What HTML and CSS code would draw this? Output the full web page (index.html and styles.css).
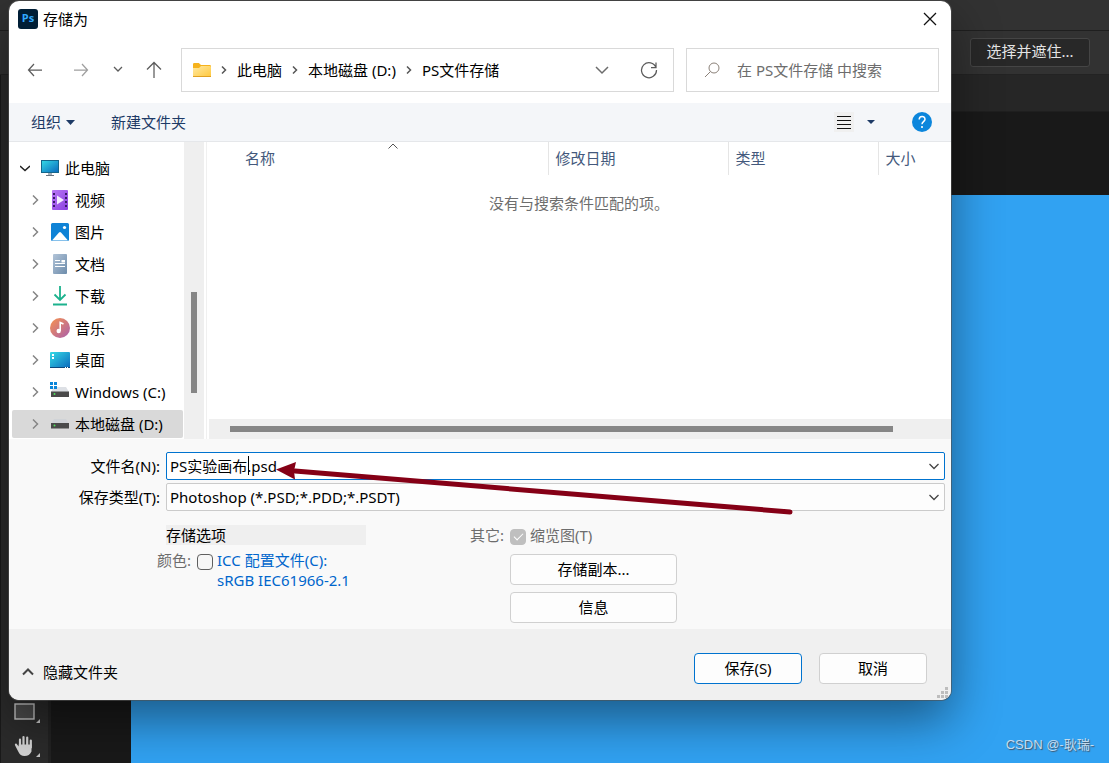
FILE: index.html
```
<!DOCTYPE html>
<html lang="zh-CN">
<head>
<meta charset="utf-8">
<title>存储为</title>
<link rel="stylesheet" href="styles.css">
</head>
<body>
<div class="app">
  <div class="menu-bar"></div>
  <div class="options-bar"><button class="mask-button" type="button">选择并遮住...</button></div>
  <div class="workspace">
    <div class="tools">
      <button class="tool" type="button" aria-label="矩形工具">
        <svg width="28" height="24" viewBox="0 0 28 24"><rect x="3" y="4" width="19" height="15" fill="#4a4a4a" stroke="#c4c4c4" stroke-width="1.4"/><path d="M28 19v4h-4z" fill="#c4c4c4"/></svg>
      </button>
      <button class="tool" type="button" aria-label="抓手工具">
        <svg width="28" height="24" viewBox="0 0 28 24"><path d="M8 14.500V5.500M11.500 12V3M15.200 12V3.500M18.800 13.500V6.500" stroke="#d2d2d2" stroke-width="2.200" stroke-linecap="round"/><path d="M7 10.500h12.800v2l2-2.500c1-1 2.200 0 1.700 1.200l-3.500 6.800c-1.200 2.500-3 4-6 4-3.500 0-5.500-1.500-7-4.500z" fill="#d2d2d2" transform="translate(27) scale(-1 1) translate(.5)"/><path d="M28 19v4h-4z" fill="#c4c4c4"/></svg>
      </button>
    </div>
    <div class="document">
      <div class="tab-bar"></div>
      <div class="pasteboard"><div class="canvas"><span class="watermark">CSDN @-耿瑞-</span></div></div>
    </div>
  </div>
</div>

<main class="dialog" role="dialog" aria-labelledby="dialog-title">
  <header class="title-bar">
    <svg width="20" height="20" viewBox="0 0 20 20"><rect width="20" height="20" rx="3" fill="#001e36"/><text class="logo-text" x="10" y="13" text-anchor="middle" fill="#31a8ff">Ps</text></svg>
    <h1 class="title" id="dialog-title">存储为</h1>
    <button class="icon-button close" type="button" aria-label="关闭"><svg width="14" height="14" viewBox="0 0 14 14"><path d="M1 1l12 12M13 1L1 13" class="line medium" stroke="#111"/></svg></button>
  </header>

  <nav class="nav-row">
    <button class="icon-button" type="button" aria-label="后退"><svg width="16" height="16" viewBox="0 0 16 16"><path d="M15 8H1.500M7 2L1.500 8L7 14" class="line medium" stroke="#5c5c5c"/></svg></button>
    <button class="icon-button forward" type="button" aria-label="前进"><svg width="16" height="16" viewBox="0 0 16 16"><path d="M1 8h13.500M9 2l5.500 6L9 14" class="line medium" stroke="#9f9f9f"/></svg></button>
    <button class="icon-button recent" type="button" aria-label="最近位置"><svg width="10" height="8" viewBox="0 0 10 8"><path d="M1 1l4 4 4-4" class="line medium" stroke="#5c5c5c"/></svg></button>
    <button class="icon-button" type="button" aria-label="上移"><svg width="16" height="18" viewBox="0 0 16 18"><path d="M8 17V2M1 8.500L8 1.500l7 7" class="line medium" stroke="#5c5c5c"/></svg></button>
    <div class="address">
      <svg width="18" height="15" viewBox="0 0 18 15"><defs><linearGradient id="folder" x1="0" y1="0" x2="1" y2="1"><stop stop-color="#ffe9a2"/><stop offset="1" stop-color="#ffc83d"/></linearGradient></defs><path d="M0 1.200Q0 0 1.200 0h4.600L8 2h8.800Q18 2 18 3.200V7H0z" fill="#f6b21c"/><path d="M0 5h6l2-2h8.800Q18 3 18 4.200v8.600q0 1.200-1.200 1.200H1.200Q0 14 0 12.800z" fill="url(#folder)"/><path d="M0 13.500h18" stroke="#e0a020"/></svg>
      <svg class="crumb-sep" width="6" height="8" viewBox="0 0 6 8"><path d="M1 .5L4.500 4L1 7.500" class="line bold" stroke="#555"/></svg>
      <a class="crumb" href="#pc">此电脑</a>
      <svg class="crumb-sep" width="6" height="8" viewBox="0 0 6 8"><path d="M1 .5L4.500 4L1 7.500" class="line bold" stroke="#555"/></svg>
      <a class="crumb" href="#d">本地磁盘 (D:)</a>
      <svg class="crumb-sep" width="6" height="8" viewBox="0 0 6 8"><path d="M1 .5L4.500 4L1 7.500" class="line bold" stroke="#555"/></svg>
      <a class="crumb" href="#ps">PS文件存储</a>
      <span class="spacer"></span>
      <button class="icon-button" type="button" aria-label="展开"><svg width="14" height="10" viewBox="0 0 14 10"><path d="M1 2l6 6 6-6" class="line bold" stroke="#6c6c6c"/></svg></button>
      <button class="icon-button refresh" type="button" aria-label="刷新"><svg width="18" height="18" viewBox="0 0 18 18"><path d="M16 6.500A7.500 7.500 0 1 0 16.500 9M16 1.500v5h-5" class="line medium" stroke="#5c5c5c"/></svg></button>
    </div>
    <label class="search">
      <svg width="16" height="16" viewBox="0 0 16 16"><circle cx="10" cy="6" r="5" class="line" stroke="#8b8179"/><path d="M6.500 9.500L1 15" class="line" stroke="#8b8179"/></svg>
      <input class="search-input" type="text" aria-label="搜索" placeholder="在 PS文件存储 中搜索">
    </label>
  </nav>

  <div class="command-bar">
    <button class="command" type="button">组织 <svg width="9" height="5" viewBox="0 0 9 5"><path d="M0 0h9L4.500 5z" fill="#1d3a66"/></svg></button>
    <button class="command" type="button">新建文件夹</button>
    <span class="spacer"></span>
    <button class="icon-button view" type="button" aria-label="视图"><svg width="20" height="20" viewBox="0 0 20 20"><rect width="20" height="20" fill="#f0f0f0"/><path d="M3 4.500h14M3 8.500h14M3 12.500h14M3 16.500h14" stroke="#111"/></svg></button>
    <button class="icon-button view-menu" type="button" aria-label="更多选项"><svg width="8" height="4" viewBox="0 0 8 4"><path d="M0 0h8L4 4z" fill="#1d3a66"/></svg></button>
    <button class="icon-button help" type="button" aria-label="帮助"><svg width="20" height="20" viewBox="0 0 20 20"><circle cx="10" cy="10" r="10" fill="#0c86dc"/><path d="M7.200 7.500C7.200 3.500 13 3.500 13 7.200c0 2.300-3 2.600-3 5" fill="none" stroke="#fff" stroke-width="1.500"/><circle cx="10" cy="15" r="1.100" fill="#fff"/></svg></button>
  </div>

  <div class="browser">
    <ul class="tree">
      <li class="node root"><svg class="twisty" width="10" height="8" viewBox="0 0 10 8"><path d="M0 2l5 4.500L10 2" class="line bold" stroke="#222"/></svg>
        <svg class="node-icon" width="20" height="18" viewBox="0 0 20 18"><defs><linearGradient id="screen" x1="0" y1="0" x2="1" y2="1"><stop stop-color="#35dbe6"/><stop offset="1" stop-color="#0a68bd"/></linearGradient></defs><rect x="1.500" y="1.500" width="17" height="12" fill="url(#screen)" stroke="#14668b"/><path d="M8 14h4v2H8z" fill="#a6b0ba"/><path d="M6 16.500h8" stroke="#68737e"/></svg>此电脑</li>
      <li class="node"><svg class="twisty" width="8" height="10" viewBox="0 0 8 10"><path d="M2 .5L6.500 5L2 9.500" class="line bold" stroke="#858585"/></svg>
        <svg class="node-icon" width="20" height="20" viewBox="0 0 20 20"><defs><linearGradient id="film" x1="0" y1="0" x2="1" y2="1"><stop stop-color="#b978f5"/><stop offset="1" stop-color="#8a3fe0"/></linearGradient></defs><rect x="2" width="16" height="20" rx="1" fill="url(#film)"/><path d="M4 3v16M16 3v16" stroke="#3b1a6b" stroke-width="2" stroke-dasharray="2 2"/><path d="M7 5.500l7 4.500-7 4.500z" fill="#f4edff"/></svg>视频</li>
      <li class="node"><svg class="twisty" width="8" height="10" viewBox="0 0 8 10"><path d="M2 .5L6.500 5L2 9.500" class="line bold" stroke="#858585"/></svg>
        <svg class="node-icon" width="20" height="20" viewBox="0 0 20 20"><rect x="1" y="1" width="18" height="18" rx="1.500" fill="#0f83d6"/><path d="M2 18.500l7-8q1-1 2 0l7 8z" fill="#fff"/><circle cx="14.500" cy="5.500" r="1.600" fill="#fff"/></svg>图片</li>
      <li class="node"><svg class="twisty" width="8" height="10" viewBox="0 0 8 10"><path d="M2 .5L6.500 5L2 9.500" class="line bold" stroke="#858585"/></svg>
        <svg class="node-icon" width="20" height="20" viewBox="0 0 20 20"><defs><linearGradient id="page" x1="0" y1="0" x2="1" y2="1"><stop stop-color="#b2c4d8"/><stop offset="1" stop-color="#6d8cab"/></linearGradient></defs><rect x="3" width="14" height="20" rx="1" fill="url(#page)"/><path d="M5 6.500h5M5 9.500h10M5 12.500h10" stroke="#fff" stroke-width="1.200"/><path d="M11.500 6H15v2.500h-3.500z" fill="#fff"/></svg>文档</li>
      <li class="node"><svg class="twisty" width="8" height="10" viewBox="0 0 8 10"><path d="M2 .5L6.500 5L2 9.500" class="line bold" stroke="#858585"/></svg>
        <svg class="node-icon" width="20" height="20" viewBox="0 0 20 20"><path d="M10 0v13.500M4.500 8.500l5.500 5.500 5.500-5.500M3 18.500h14" fill="none" stroke="#1cb28d" stroke-width="1.800"/></svg>下载</li>
      <li class="node"><svg class="twisty" width="8" height="10" viewBox="0 0 8 10"><path d="M2 .5L6.500 5L2 9.500" class="line bold" stroke="#858585"/></svg>
        <svg class="node-icon" width="20" height="20" viewBox="0 0 20 20"><defs><linearGradient id="music" x1="0" y1="0" x2="1" y2="1"><stop offset=".15" stop-color="#ec8b5c"/><stop offset="1" stop-color="#a95fae"/></linearGradient></defs><circle cx="10" cy="10" r="10" fill="url(#music)"/><circle cx="8.700" cy="13" r="2.200" fill="#fff"/><path d="M10.200 13V4.500L13.500 6" fill="none" stroke="#fff" stroke-width="1.600"/></svg>音乐</li>
      <li class="node"><svg class="twisty" width="8" height="10" viewBox="0 0 8 10"><path d="M2 .5L6.500 5L2 9.500" class="line bold" stroke="#858585"/></svg>
        <svg class="node-icon" width="20" height="20" viewBox="0 0 20 20"><rect y="2" width="20" height="16" rx="1" fill="url(#screen)"/><path d="M0 17.500h20" stroke="#0b477c"/><path d="M2 4h2v2H2zM2 7h2v2H2z" fill="#fff"/><path d="M15 17h1v1h-1zM17 17h1v1h-1z" fill="#fff"/></svg>桌面</li>
      <li class="node"><svg class="twisty" width="8" height="10" viewBox="0 0 8 10"><path d="M2 .5L6.500 5L2 9.500" class="line bold" stroke="#858585"/></svg>
        <svg class="node-icon" width="20" height="20" viewBox="0 0 20 20"><path d="M4 5h12l3 5H1z" fill="#dde0e5"/><rect x="1" y="9.500" width="18" height="5.500" fill="#4a4a4a"/><circle cx="4.500" cy="12" r="1" fill="#4fe05a"/><path d="M0 0h3v3H0zM4 0h3v3H4zM0 4h3v3H0zM4 4h3v3H4z" fill="#0a85d9"/></svg>Windows (C:)</li>
      <li class="node selected" aria-selected="true"><svg class="twisty" width="8" height="10" viewBox="0 0 8 10"><path d="M2 .5L6.500 5L2 9.500" class="line bold" stroke="#858585"/></svg>
        <svg class="node-icon" width="20" height="20" viewBox="0 0 20 20"><path d="M4 5h12l3 5H1z" fill="#d0d3d7"/><rect x="1" y="9" width="18" height="5.500" fill="#4a4a4a"/><circle cx="4.500" cy="11.500" r="1" fill="#4fe05a"/></svg>本地磁盘 (D:)</li>
    </ul>
    <div class="v-scroll"><div class="v-thumb"></div></div>
    <section class="files">
      <table class="file-table">
        <thead><tr>
          <th class="col-name">名称<svg class="sort-mark" width="10" height="6" viewBox="0 0 10 6"><path d="M.5 5.500L5 1l4.500 4.500" class="line" stroke="#555"/></svg></th>
          <th class="col-date">修改日期</th><th class="col-type">类型</th><th>大小</th>
        </tr></thead>
      </table>
      <p class="empty">没有与搜索条件匹配的项。</p>
      <div class="h-scroll"><div class="h-thumb"></div></div>
    </section>
  </div>

  <form class="form">
    <div class="fields">
      <label class="field-label" for="file-name">文件名(N):</label>
      <div class="combo">
        <input class="field active" id="file-name" type="text" value="PS实验画布.psd"><span class="caret"></span>
        <svg class="combo-arrow" width="10" height="7" viewBox="0 0 10 7"><path d="M.5 1L5 5.500L9.500 1" class="line medium" stroke="#444"/></svg>
      </div>
      <label class="field-label" for="file-type">保存类型(T):</label>
      <div class="combo">
        <select class="field" id="file-type"><option>Photoshop (*.PSD;*.PDD;*.PSDT)</option></select>
        <svg class="combo-arrow" width="10" height="7" viewBox="0 0 10 7"><path d="M.5 1L5 5.500L9.500 1" class="line medium" stroke="#444"/></svg>
      </div>
    </div>
    <div class="options">
      <div class="save-options">
        <h2 class="options-title">存储选项</h2>
        <div class="color-row">
          <span class="muted">颜色:</span>
          <input class="check" type="checkbox" id="icc">
          <label class="icc-label" for="icc">ICC 配置文件(C):<br>sRGB IEC61966-2.1</label>
        </div>
      </div>
      <div class="other-options">
        <span class="muted">其它:</span>
        <div class="other-stack">
          <div class="thumb-row"><input class="check" type="checkbox" id="thumb" checked disabled><label class="muted" for="thumb">缩览图(T)</label></div>
          <button class="button wide" type="button">存储副本...</button>
          <button class="button wide" type="button">信息</button>
        </div>
      </div>
    </div>
    <svg class="pointer" width="520" height="56" viewBox="0 0 520 56"><path d="M18 10L513 51" stroke="#850016" stroke-width="5" stroke-linecap="round"/><path d="M-1 8.500L19 1L17 10L18 18.500z" fill="#850016"/></svg>
  </form>

  <footer class="footer">
    <button class="hide-folders" type="button"><svg width="12" height="8" viewBox="0 0 12 8"><path d="M1 6.500l5-5 5 5" class="line heavy" stroke="#444"/></svg>隐藏文件夹</button>
    <span class="spacer"></span>
    <button class="button primary" type="button">保存(S)</button>
    <button class="button" type="button">取消</button>
    <svg class="grip" width="11" height="11" viewBox="0 0 11 11"><path d="M8 0h3v3H8zM4 4h3v3H4zM8 4h3v3H8zM0 8h3v3H0zM4 8h3v3H4zM8 8h3v3H8z" fill="#bdbdbd"/></svg>
  </footer>
</main>
</body>
</html>
```

FILE: styles.css
```
* { box-sizing: border-box; }
body {
  margin: 0;
  position: relative;
  min-height: 100vh;
  background: #191919;
  color: #000;
  font: 15px/20px "Noto Sans", "Noto Sans CJK SC", sans-serif;
}
button, input, select { font: inherit; color: inherit; margin: 0; }
button { padding: 0; border: 0; background: none; }
h1, h2, p, ul { margin: 0; padding: 0; font-size: 15px; font-weight: 400; }
.spacer { flex: 1; }
.line { fill: none; stroke-width: 1; }
.medium { stroke-width: 1.25; }
.bold { stroke-width: 1.5; }
.heavy { stroke-width: 2; }
.muted { color: #6d6d6d; }

/* Application behind the dialog */
.app { display: flex; flex-direction: column; min-height: 100vh; overflow: hidden; }
.menu-bar { height: 31px; background: #323232; border-bottom: 1px solid #1f1f1f; }
.options-bar {
  display: flex; justify-content: flex-end; align-items: flex-start;
  height: 44px; padding: 7px 19px 0 0;
  background: #323232; border-bottom: 1px solid #232323;
}
.mask-button {
  width: 120px; height: 29px; padding-bottom: 4px;
  border: 1px solid #454545; border-radius: 3px;
  background: #282828; color: #e4e4e4;
}
.workspace { flex: 1; display: flex; }
.tools {
  width: 51px; display: flex; flex-direction: column; justify-content: flex-end; gap: 10px;
  padding: 0 0 5px 11px;
  background: #2b2b2b; border-left: 1px solid #1a1a1a; border-right: 3px solid #222;
}
.tool { width: 28px; height: 24px; }
.tool svg { display: block; }
.document { flex: 1; display: flex; flex-direction: column; }
.tab-bar { height: 37px; background: #262626; border-bottom: 1px solid #1f1f1f; }
.pasteboard { flex: 1; display: flex; padding: 83px 0 0 80px; background: #191919; }
.canvas { flex: 1; display: flex; justify-content: flex-end; align-items: flex-end; padding: 0 15px 8px 0; background: #31a2f2; }
.watermark { font: 13px/20px "Liberation Sans", "Noto Sans CJK SC", sans-serif; color: #c3dcf0; text-shadow: 1px 1px 1px #456; }

/* Dialog window */
.dialog {
  position: absolute; top: 1px; left: 9px; right: 158px;
  display: flex; flex-direction: column;
  border-radius: 10px; overflow: hidden;
  background: #fff;
  box-shadow: 0 0 0 1px rgba(80, 80, 80, .6), 0 20px 50px rgba(0, 0, 0, .45);
}
.title-bar { display: flex; align-items: center; gap: 5px; height: 36px; padding: 0 14px 0 9px; }
.logo-text { font: 700 11px "Open Sans", sans-serif; }
.close { margin-left: auto; }
.icon-button { display: flex; align-items: center; justify-content: center; }

.nav-row { display: flex; align-items: center; gap: 12px; padding: 11px 12px 11px 18px; }
.forward { margin-left: 18px; }
.recent { margin: 0 11px 0 12px; }
.address {
  flex: 1; display: flex; align-items: center; height: 44px;
  margin-left: 7px; padding: 0 15px 0 11px; border: 1px solid #d9d9d9;
}
.crumb { color: #000; text-decoration: none; white-space: nowrap; }
.crumb-sep { margin: 0 10px; }
.refresh { margin-left: 31px; }
.search { display: flex; align-items: center; gap: 17px; width: 253px; height: 44px; padding: 0 17px; border: 1px solid #d9d9d9; }
.search-input { flex: 1; min-width: 0; padding: 0; border: 0; outline: 0; background: none; }
.search-input::placeholder { color: #6d6d6d; opacity: 1; }

.command-bar {
  display: flex; align-items: center; height: 39px; padding: 0 19px 0 22px;
  background: #f4f6f9; border-bottom: 1px solid #e5e7ea;
}
.command { display: flex; align-items: center; gap: 5px; margin-right: 36px; color: #1d3a66; }
.view-menu { margin: 0 37px 0 13px; }

.browser { display: flex; height: 297px; }
.tree { display: flex; flex-direction: column; gap: 4px; width: 175px; padding: 12px 1px 0 3px; list-style: none; }
.node { display: flex; align-items: center; height: 28px; padding-left: 19px; border-radius: 2px; white-space: nowrap; }
.root { padding-left: 8px; }
.node-icon { margin: 0 5px 0 11px; flex: none; }
.twisty { flex: none; }
.root .node-icon { margin-left: 10px; }
.selected { background: #d9d9d9; }
.v-scroll { width: 20px; padding: 150px 7px 0; background: #efefef; }
.v-thumb { width: 6px; height: 101px; background: #868686; }
.files { flex: 1; min-width: 0; display: flex; flex-direction: column; margin-left: 2px; border-left: 1px solid #f0f0f0; }
.file-table { margin-left: 31px; border-collapse: collapse; table-layout: fixed; color: #44597c; }
.file-table th { position: relative; height: 33px; padding: 0 0 2px 7px; text-align: left; font-weight: 400; border-right: 1px solid #e5e5e5; }
.file-table th:last-child { border-right: 0; }
.col-name { width: 310px; }
.col-date { width: 180px; }
.col-type { width: 150px; }
.sort-mark { position: absolute; top: 1px; left: calc(50% - 5px); }
.empty { flex: 1; padding-top: 18px; text-align: center; color: #6d6d6d; }
.h-scroll { height: 20px; margin-left: 2px; padding: 7px 58px 7px 21px; background: #efefef; }
.h-thumb { height: 6px; background: #868686; }

.form { position: relative; height: 190px; padding: 13px 6px 0 0; background: #f9f9f9; }
.fields { display: grid; grid-template-columns: 151px 1fr; column-gap: 6px; row-gap: 3px; align-items: center; }
.field-label { text-align: right; }
.combo { position: relative; display: flex; }
.field {
  appearance: none; flex: 1; min-width: 0; height: 28px; padding: 0 3px;
  border: 1px solid #cbcbcb; border-radius: 2px; background: #fdfdfd; outline: 0;
}
.field.active { padding-bottom: 2px; border-color: #0073cf; background: #fff; }
.combo-arrow { position: absolute; right: 6px; top: 11px; }
.caret { position: absolute; left: 82px; top: 4px; width: 1px; height: 19px; background: #000; }
.options { display: flex; padding: 14px 0 0 148px; gap: 104px; }
.save-options { width: 209px; }
.options-title { margin-left: 9px; background: #efefef; }
.color-row { display: flex; gap: 4px; margin-top: 5px; white-space: nowrap; }
.icc-label { color: #0066cc; }
.check {
  appearance: none; flex: none; width: 16px; height: 16px; margin-left: 2px; margin-top: 4px;
  border: 1px solid #5f5f5f; border-radius: 4px; background: #f6f6f6;
}
.check:checked { display: flex; align-items: center; justify-content: center; border-color: #bfbfbf; background: #bfbfbf; }
.check:checked::before {
  content: ""; width: 8px; height: 4px; margin-bottom: 3px;
  border: solid #fff; border-width: 0 0 1px 1px; transform: rotate(-45deg);
}
.other-options { display: flex; gap: 6px; }
.other-stack { display: flex; flex-direction: column; gap: 7px; }
.thumb-row { display: flex; gap: 4px; height: 22px; }
.thumb-row .check { margin-left: 0; }
.button { width: 108px; height: 31px; padding-bottom: 2px; border: 1px solid #d0d0d0; border-radius: 4px; background: #fdfdfd; }
.wide { width: 167px; }
.primary { border-color: #0073cf; }
.pointer { position: absolute; left: 268px; top: 22px; pointer-events: none; overflow: visible; }

.footer { position: relative; display: flex; align-items: flex-start; gap: 17px; padding: 24px 24px 9px 13px; background: #f0f0f0; }
.hide-folders { display: flex; align-items: center; gap: 9px; height: 38px; }
.grip { position: absolute; right: 3px; bottom: 2px; }
```
